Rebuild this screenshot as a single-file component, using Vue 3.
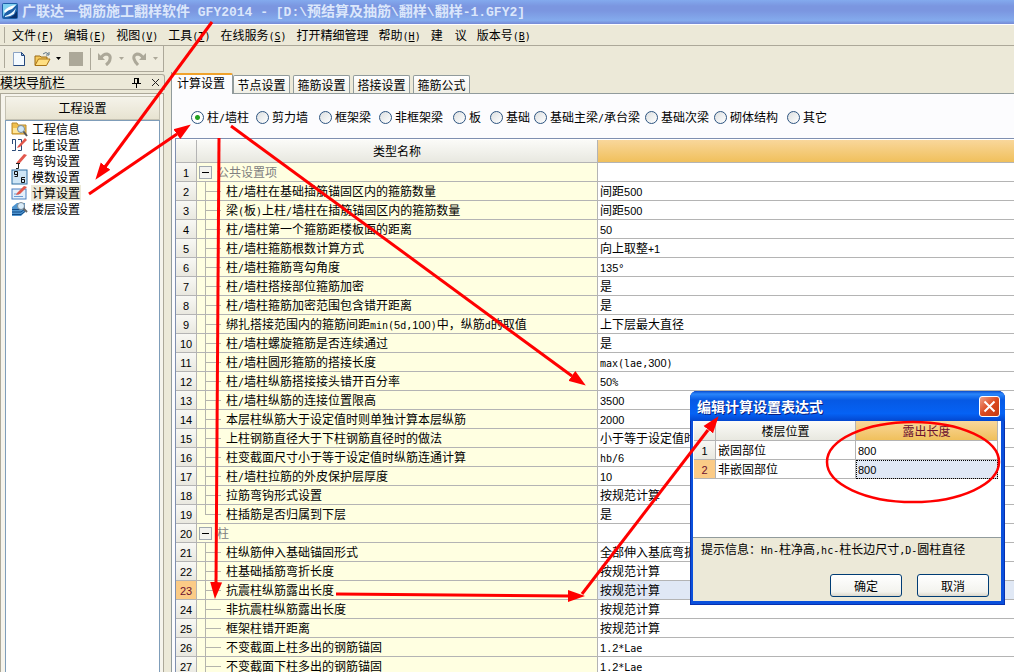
<script setup>
import { h, ref } from 'vue'

// Sets Latin runs and digits in half-width faces next to full-width Chinese characters
const Txt = (props) =>
  props.s
    .split(/(\d+|[^\d\u3000-\uffef]+)/)
    .filter(Boolean)
    .map((part) => {
      if (/^\d/.test(part)) return h('span', { class: 'digits' }, part)
      if (/^[\x20-\x7e°]/.test(part)) return h('span', { class: 'latin' }, part)
      return part
    })
Txt.props = ['s']

const menus = [
  ['文件', 'F'], ['编辑', 'E'], ['视图', 'V'], ['工具', 'T'], ['在线服务', 'S'],
  ['打开精细管理', ''], ['帮助', 'H'], ['建  议', ''], ['版本号', 'B'],
]
const navItems = ['工程信息', '比重设置', '弯钩设置', '模数设置', '计算设置', '楼层设置']
const activeNav = ref(4)
const tabs = ['计算设置', '节点设置', '箍筋设置', '搭接设置', '箍筋公式']
const activeTab = ref(0)
const kinds = ['柱/墙柱', '剪力墙', '框架梁', '非框架梁', '板', '基础', '基础主梁/承台梁', '基础次梁', '砌体结构', '其它']
const kind = ref('柱/墙柱')
const selected = ref(23)

const rows = [
  { group: true, name: '公共设置项', value: '' },
  { name: '柱/墙柱在基础插筋锚固区内的箍筋数量', value: '间距500' },
  { name: '梁(板)上柱/墙柱在插筋锚固区内的箍筋数量', value: '间距500' },
  { name: '柱/墙柱第一个箍筋距楼板面的距离', value: '50' },
  { name: '柱/墙柱箍筋根数计算方式', value: '向上取整+1' },
  { name: '柱/墙柱箍筋弯勾角度', value: '135°' },
  { name: '柱/墙柱搭接部位箍筋加密', value: '是' },
  { name: '柱/墙柱箍筋加密范围包含错开距离', value: '是' },
  { name: '绑扎搭接范围内的箍筋间距min(5d,100)中，纵筋d的取值', value: '上下层最大直径' },
  { name: '柱/墙柱螺旋箍筋是否连续通过', value: '是' },
  { name: '柱/墙柱圆形箍筋的搭接长度', value: 'max(lae,300)' },
  { name: '柱/墙柱纵筋搭接接头错开百分率', value: '50%' },
  { name: '柱/墙柱纵筋的连接位置限高', value: '3500' },
  { name: '本层柱纵筋大于设定值时则单独计算本层纵筋', value: '2000' },
  { name: '上柱钢筋直径大于下柱钢筋直径时的做法', value: '小于等于设定值时' },
  { name: '柱变截面尺寸小于等于设定值时纵筋连通计算', value: 'hb/6' },
  { name: '柱/墙柱拉筋的外皮保护层厚度', value: '10' },
  { name: '拉筋弯钩形式设置', value: '按规范计算' },
  { name: '柱插筋是否归属到下层', value: '是', last: true },
  { group: true, name: '柱', value: '' },
  { name: '柱纵筋伸入基础锚固形式', value: '全部伸入基底弯折' },
  { name: '柱基础插筋弯折长度', value: '按规范计算' },
  { name: '抗震柱纵筋露出长度', value: '按规范计算' },
  { name: '非抗震柱纵筋露出长度', value: '按规范计算' },
  { name: '框架柱错开距离', value: '按规范计算' },
  { name: '不变截面上柱多出的钢筋锚固', value: '1.2*Lae' },
  { name: '不变截面下柱多出的钢筋锚固', value: '1.2*Lae' },
]
</script>

<template>
  <div class="app">
    <header class="titlebar">
      <svg class="logo" width="16" height="16" viewBox="0 0 16 16">
        <rect width="16" height="16" rx="2" fill="#1d5fa8" />
        <path d="M1 1h14L11 5 4 8 1 14z" fill="#7fd0f0" />
        <path d="M2 8Q6 3 14 2L10 6Q6 7 3 10z" fill="#fff" />
        <path d="M3 13Q10 11 14 5L12 11Q8 14 3 14z" fill="#e8f6ff" />
        <path d="M9 14Q13 12 15 8V15H6z" fill="#0b2f6b" />
      </svg>
      <h1>广联达一钢筋施工翻样软件<span class="title-latin"> GFY2014 - [D:\</span>预结算及抽筋<span class="title-latin">\</span>翻样<span class="title-latin">\</span>翻样<span class="title-latin">-1.GFY2]</span></h1>
    </header>

    <nav class="menubar">
      <button v-for="m in menus" :key="m[0]" type="button"><Txt :s="m[0]" /><span v-if="m[1]" class="latin">(<u>{{ m[1] }}</u>)</span></button>
    </nav>

    <div class="toolbar">
      <button type="button" aria-label="新建">
        <svg width="14" height="16" viewBox="0 0 14 16">
          <path d="M1.500 1.500h8l3 3v10h-11z" fill="#f4faff" stroke="#8ba3c4" />
          <path d="M12.500 5v9.500h-11" fill="none" stroke="#24477c" />
          <path d="M9.500 1.500v3h3z" fill="#9fc3e8" stroke="#24477c" />
        </svg>
      </button>
      <button type="button" class="open" aria-label="打开">
        <svg width="17" height="16" viewBox="0 0 17 16">
          <path d="M1 14V5h5l1 1h6v3" fill="#f5c95c" stroke="#9a6a14" />
          <path d="M1 14.500L4.500 8H16l-3.500 6.500z" fill="#ffdf82" stroke="#a87417" />
          <path d="M9 3Q12 0 14.500 3M15 1v3h-3" fill="none" stroke="#5d7486" />
        </svg>
      </button>
      <button type="button" class="drop" aria-label="最近文件">
        <svg width="5" height="3" viewBox="0 0 5 3"><path d="M0 0h5L2.500 3z" fill="#000" /></svg>
      </button>
      <button type="button" class="save" aria-label="保存" disabled></button>
      <span class="sep"></span>
      <button type="button" class="undo" aria-label="撤销" disabled>
        <svg width="14" height="14" viewBox="0 0 14 14">
          <path d="M3 6Q5 2 9 2Q13 3 12 7Q12 10 8 13" fill="none" stroke="#aca899" stroke-width="3" />
          <path d="M0 1v7h7z" fill="#aca899" />
        </svg>
      </button>
      <button type="button" class="drop pale" aria-label="撤销列表" disabled>
        <svg width="5" height="3" viewBox="0 0 5 3"><path d="M0 0h5L2.500 3z" fill="#aca899" /></svg>
      </button>
      <button type="button" class="redo" aria-label="恢复" disabled>
        <svg width="14" height="14" viewBox="0 0 14 14">
          <path d="M11 6Q9 2 5 2Q1 3 2 7Q3 10 6 13" fill="none" stroke="#aca899" stroke-width="3" />
          <path d="M14 1v7H7z" fill="#aca899" />
        </svg>
      </button>
      <button type="button" class="drop pale" aria-label="恢复列表" disabled>
        <svg width="5" height="3" viewBox="0 0 5 3"><path d="M0 0h5L2.500 3z" fill="#aca899" /></svg>
      </button>
    </div>

    <div class="body">
      <aside class="dock">
        <div class="dock-title">
          <h2>模块导航栏</h2>
          <button type="button" aria-label="固定">
            <svg width="9" height="11" viewBox="0 0 9 11"><path d="M2.500 1v5M2 1.500h4M5.500 1v5M6.500 1v5M0 6.500h9M4.500 7v4" fill="none" stroke="#000" /></svg>
          </button>
          <button type="button" aria-label="关闭导航栏">
            <svg width="9" height="9" viewBox="0 0 9 9"><path d="M1 1l7 7M8 1l-7 7" fill="none" stroke="#222" /></svg>
          </button>
        </div>
        <div class="dock-body">
          <button type="button" class="section">工程设置</button>
          <ul class="nav">
            <li v-for="(item, i) in navItems" :key="item">
              <button type="button" :class="{ on: activeNav === i }" @click="activeNav = i">
                <svg width="17" height="16" viewBox="0 0 17 16">
                  <template v-if="i === 0">
                    <path d="M1 2h5l1 2h8v9H1z" fill="#f1c04e" stroke="#b98a2b" />
                    <path d="M2 7h12v5H2z" fill="#ffe79b" />
                    <circle cx="10" cy="8" r="3.500" fill="#cfe8fa" stroke="#7a8792" />
                    <path d="M12.500 10.500L16 15" stroke="#555" stroke-width="2" />
                  </template>
                  <template v-else-if="i === 1">
                    <path d="M1 2.500h3.500v11H1M7 2.500h3.500v11H7M1.500 2v5" fill="none" stroke="#2b4b78" />
                    <path d="M7 9L14 1l2 2-7 7-3 1z" fill="#e2574c" />
                  </template>
                  <template v-else-if="i === 2">
                    <path d="M6 9L13 1l3 1-7 8-4 1z" fill="#e2574c" />
                    <path d="M5 10.500h4M7.500 11v4.500H5" fill="none" stroke="#222" />
                  </template>
                  <template v-else-if="i === 3">
                    <rect x="1" y="1" width="15" height="14" fill="#cfe6f6" stroke="#2f6fa3" />
                    <path d="M6.500 5.500h-3v-3h3v5h-3M14 8.500h-3.500v5h3v-3h-3" fill="none" stroke="#111" />
                  </template>
                  <template v-else-if="i === 4">
                    <rect x="1" y="4" width="14" height="10" fill="#e4effb" stroke="#4a7fc0" />
                    <path d="M3 9h5M3 11.500h9" stroke="#6a9bd2" />
                    <path d="M6 8L13 1l3 1-7 7-4 1z" fill="#e2574c" />
                  </template>
                  <template v-else>
                    <path d="M1 6l5-4h8v9l-4 4H1z" fill="#4f95d0" />
                    <path d="M1 8.500h9l4-3M1 11h9l4-3M1 13.500h9l4-3" fill="none" stroke="#114a86" />
                    <circle cx="10" cy="5" r="3.500" fill="#d8ecfa" stroke="#7c8a96" />
                    <path d="M12.500 7.500L16 11" stroke="#666" stroke-width="2" />
                  </template>
                </svg>
                <span>{{ item }}</span>
              </button>
            </li>
          </ul>
        </div>
      </aside>

      <main class="work">
        <div class="tabs">
          <button v-for="(t, i) in tabs" :key="t" type="button" :class="{ on: activeTab === i }" @click="activeTab = i">{{ t }}</button>
        </div>
        <div class="page">
          <div class="kinds">
            <label v-for="k in kinds" :key="k"><input v-model="kind" type="radio" name="kind" :value="k" /><span><Txt :s="k" /></span></label>
          </div>
          <div class="sheet">
            <table class="grid main">
              <colgroup><col class="c-no" /><col class="c-name" /><col /></colgroup>
              <thead>
                <tr><th></th><th>类型名称</th><th class="hot"></th></tr>
              </thead>
              <tbody>
                <tr v-for="(r, i) in rows" :key="i" :class="{ sel: selected === i + 1 }" @click="selected = i + 1">
                  <th><Txt :s="String(i + 1)" /></th>
                  <td class="name">
                    <div v-if="r.group" class="cell group">
                      <button type="button" class="fold" aria-label="折叠"></button><span>{{ r.name }}</span>
                    </div>
                    <div v-else class="cell"><i class="branch" :class="{ last: r.last }"></i><span><Txt :s="r.name" /></span></div>
                  </td>
                  <td class="value"><Txt :s="r.value" /></td>
                </tr>
              </tbody>
            </table>
          </div>
        </div>
      </main>
    </div>

    <section class="dialog" role="dialog" aria-label="编辑计算设置表达式">
      <div class="dialog-title">
        <h2>编辑计算设置表达式</h2>
        <button type="button" aria-label="关闭">
          <svg width="13" height="13" viewBox="0 0 13 13"><path d="M1.500 1.500l10 10M11.500 1.500l-10 10" stroke="#fff" stroke-width="2" /></svg>
        </button>
      </div>
      <div class="dialog-grid">
        <table class="grid small">
          <colgroup><col class="d-no" /><col /><col class="d-val" /></colgroup>
          <thead>
            <tr><th></th><th>楼层位置</th><th class="hot">露出长度</th></tr>
          </thead>
          <tbody>
            <tr><th><Txt s="1" /></th><td class="value">嵌固部位</td><td class="value"><Txt s="800" /></td></tr>
            <tr class="sel"><th><Txt s="2" /></th><td class="value plain">非嵌固部位</td><td class="value focus"><Txt s="800" /></td></tr>
          </tbody>
        </table>
      </div>
      <p><Txt s="提示信息：Hn-柱净高,hc-柱长边尺寸,D-圆柱直径" /></p>
      <div class="dialog-actions">
        <button type="button">确定</button>
        <button type="button">取消</button>
      </div>
    </section>

    <svg class="marks" width="1014" height="672" viewBox="0 0 1014 672">
      <defs>
        <marker id="head" markerWidth="18" markerHeight="13" refX="16" refY="6.500" orient="auto" markerUnits="userSpaceOnUse">
          <path d="M0 0.500L17 6.500L0 12.500z" fill="#f00" />
        </marker>
      </defs>
      <g fill="none" stroke="#f00" stroke-width="3">
        <path d="M212 22L105 167" /><path d="M105 167L96 179" stroke="none" marker-end="url(#head)" />
        <path d="M89 194L177 134" /><path d="M177 134L190 125" stroke="none" marker-end="url(#head)" />
        <path d="M219 138L216 584" /><path d="M216 584L215 598" stroke="none" marker-end="url(#head)" />
        <path d="M231 126L572 376" /><path d="M572 376L585 385" stroke="none" marker-end="url(#head)" />
        <path d="M336 594L570 596" /><path d="M570 596L584 596" stroke="none" marker-end="url(#head)" />
        <path d="M582 594L708 430" /><path d="M708 430L718 417" stroke="none" marker-end="url(#head)" />
        <ellipse cx="913" cy="462" rx="86" ry="40" stroke-width="2.500" />
      </g>
    </svg>
  </div>
</template>

<style>
html, body { margin: 0; overflow: hidden; }
.latin { font-family: "DejaVu Sans Mono", "Liberation Mono", monospace; font-size: 10px; line-height: 1; white-space: pre; }
.digits { font-family: "Liberation Sans", Arial, sans-serif; font-size: 11px; line-height: 1; }
</style>

<style scoped>
.app {
  position: relative; display: flex; flex-direction: column; height: 100vh; overflow: hidden;
  background: #ece9d8; color: #000; font: 12px/16px "Noto Sans CJK SC", sans-serif; white-space: nowrap;
}
button { font: inherit; color: inherit; border: 0; padding: 0; margin: 0; background: none; white-space: nowrap; }
svg { display: block; flex: none; }
h1, h2, p, ul { margin: 0; padding: 0; list-style: none; }

.titlebar {
  display: flex; align-items: center; gap: 4px; height: 24px; padding: 0 2px 2px; box-sizing: border-box; flex: none;
  background: linear-gradient(#83aaee, #7b96e0 25%, #7b96e0 45%, #84abed 85%, #7689d6);
}
.titlebar h1 { font-size: 14px; line-height: 20px; font-weight: 700; color: #dbe7fb; }
.title-latin { font-family: "Liberation Mono", monospace; font-size: 13px; white-space: pre; }

.menubar {
  display: flex; align-items: center; gap: 10px; height: 22px; box-sizing: border-box; flex: none;
  padding-left: 12px; border-top: 1px solid #fff; border-bottom: 1px solid #aca899;
  background: linear-gradient(#aca899, #aca899) 4px 2px / 1px 16px no-repeat;
}

.toolbar {
  display: flex; align-items: center; width: 164px; height: 26px; box-sizing: border-box; flex: none;
  padding-left: 12px; border-right: 1px solid #aca899; border-bottom: 1px solid #aca899;
  background: linear-gradient(#aca899, #aca899) 4px 3px / 1px 19px no-repeat, #efecde;
}
.open { margin-left: 8px; }
.drop { margin-left: 5px; }
.save { width: 14px; height: 14px; margin-left: 8px; background: #aca899; }
.sep { width: 1px; height: 22px; margin: 0 7px; background: #aca899; }
.pale { margin-left: 7px; }
.redo { margin-left: 8px; }

.body { display: flex; flex: 1; min-height: 0; gap: 6px; }
.dock { display: flex; flex-direction: column; width: 165px; flex: none; padding-top: 2px; box-sizing: border-box; }
.dock-title {
  display: flex; align-items: center; gap: 10px; height: 16px; box-sizing: border-box; padding-right: 4px;
  border: 1px solid #aca899; border-left: 0; border-radius: 0 3px 0 0;
}
.dock-title h2 { flex: 1; font-size: 13px; line-height: 14px; font-weight: 400; }
.dock-body {
  display: flex; flex-direction: column; flex: 1; min-height: 0; margin: 3px 1px 0 0; padding: 2px 3px 0 4px;
  border: 1px solid #aca899; border-width: 1px 1px 0; background: #f6f4ec;
}
.section {
  height: 24px; flex: none; border: 1px solid #c4c1b2; background: linear-gradient(#f5f3ea, #e7e3d1);
}
.nav { flex: 1; border: 1px solid #7f9db9; border-bottom: 0; background: #fff; }
.nav button { display: flex; align-items: center; gap: 3px; margin-left: 5px; height: 16px; }
.nav span { padding: 0 1px; line-height: 16px; }
.nav .on span { background: #ece9d8; }

.work { display: flex; flex-direction: column; flex: 1; min-width: 0; border-left: 1px solid #919b9c; }
.tabs { display: flex; align-items: flex-end; gap: 3px; height: 22px; flex: none; border-bottom: 1px solid #919b9c; box-sizing: border-box; }
.tabs button {
  width: 57px; height: 18px; box-sizing: border-box; border: 1px solid #919b9c; border-bottom: 0; border-radius: 2px 2px 0 0;
  background: linear-gradient(#fff, #f0efe6); line-height: 17px; text-align: center;
}
.tabs .on {
  width: 62px; height: 21px; margin: 0 -3px -1px -1px; padding: 0 2px 3px 0; border-top: 2px solid #f0a22c;
  background: #fcfcfe; line-height: 16px;
}
.page { display: flex; flex-direction: column; flex: 1; min-height: 0; background: #fcfcfe; }
.kinds {
  display: grid; grid-template-columns: 65px 63px 60px 74px 37px 44px 111px 69px 73px auto;
  align-items: center; height: 44px; padding: 2px 0 0 19px; box-sizing: border-box; flex: none;
}
.kinds label { display: flex; align-items: center; gap: 3px; }
.kinds input {
  appearance: none; width: 13px; height: 13px; margin: 0; border: 1px solid #2d5480; border-radius: 50%;
  background: linear-gradient(135deg, #dcdfe0, #fff); flex: none;
}
.kinds input:checked { background: radial-gradient(circle, #21a121 0 2px, #fff 3px); }

.sheet { flex: 1; min-height: 0; overflow: hidden; margin-left: 3px; padding-top: 1px; border: 1px solid #7f8fb0; border-width: 1px 0 0 1px; background: #fff; }
.grid { width: 100%; table-layout: fixed; border-collapse: separate; border-spacing: 0; }
.grid th, .grid td { height: 19px; padding: 0; box-sizing: border-box; border: 1px solid #b4b4b4; border-width: 0 1px 1px 0; overflow: hidden; line-height: 16px; }
.grid th { font-weight: 400; text-align: center; background: linear-gradient(#f8f8f4, #e9e8e0); }
.grid thead th { height: 23px; background: linear-gradient(#fbfbf8, #e8e8e0); }
.grid thead .hot { background: linear-gradient(#f9d79b, #f0c05c); color: #6b1030; }
.main th:last-child, .main td:last-child { border-right: 0; }
.c-no { width: 21px; }
.c-name { width: 401px; }
.grid .name { background: #ffffe1; }
.cell { display: flex; align-items: center; height: 18px; }
.branch {
  width: 16px; height: 18px; margin: 0 5px 0 8px; flex: none;
  background: linear-gradient(#b4b4ac, #b4b4ac) 0 0 / 1px 100% no-repeat, linear-gradient(#b4b4ac, #b4b4ac) 0 9px / 100% 1px no-repeat;
}
.branch.last { background-size: 1px 9px, 100% 1px; }
.group { color: #808080; }
.fold {
  width: 13px; height: 13px; margin: 0 5px 0 2px; border: 1px solid #a0a8b0;
  background: linear-gradient(#000, #000) 2px 5px / 7px 1px no-repeat, #f3f3ee;
}
.grid .value { padding-left: 2px; background: #fff; }
.grid .sel .value { background: #e0e8f5; }
.grid .sel th { background: #fbcb86; color: #6b1030; }

.dialog {
  position: absolute; left: 690px; top: 391px; width: 315px; box-sizing: border-box; padding: 0 4px 4px 3px;
  border-radius: 7px 7px 0 0; background: #0a50dc; box-shadow: inset 0 0 0 1px #0831b0;
}
.dialog-title {
  display: flex; align-items: center; justify-content: space-between; height: 30px; margin: 0 -4px 0 -3px; padding: 0 5px 0 7px;
  border-radius: 7px 7px 0 0; background: linear-gradient(#0a4ccc, #2a86fb 10%, #0659e4 30%, #0562f5 75%, #0347cf);
}
.dialog-title h2 { font-size: 14px; line-height: 20px; color: #fff; text-shadow: 1px 1px #0a1f80; }
.dialog-title button {
  display: flex; align-items: center; justify-content: center; width: 21px; height: 21px; box-sizing: border-box;
  border: 1px solid #fff; border-radius: 3px; background: linear-gradient(135deg, #f0a088, #dc4a20 50%, #c43a12);
}
.dialog-grid { height: 116px; padding: 0 3px 0 1px; background: #fff; border-bottom: 1px solid #919b9c; }
.small thead th { height: 20px; }
.d-no { width: 22px; }
.d-val { width: 142px; }
.grid .sel .plain { background: #fff; }
.grid .focus { outline: 1px dotted #000; outline-offset: -1px; }
.dialog p { padding: 3px 8px; background: #ece9d8; }
.dialog-actions { display: flex; justify-content: flex-end; gap: 15px; padding: 14px 12px 4px; background: #ece9d8; }
.dialog-actions button {
  width: 72px; height: 23px; border: 1px solid #003c74; border-radius: 3px; background: linear-gradient(#fff, #f3f3ee 80%, #dbd8cc);
}
.marks { position: absolute; left: 0; top: 0; pointer-events: none; }
</style>
